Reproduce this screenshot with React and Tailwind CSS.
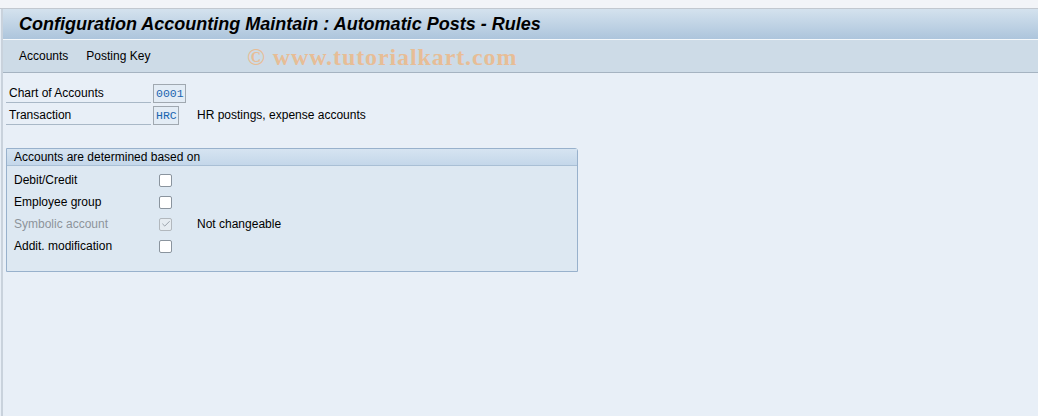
import { Check } from "lucide-react";

const ROWS = [
  { label: "Debit/Credit", checked: false },
  { label: "Employee group", checked: false },
  { label: "Symbolic account", checked: true, disabled: true, note: "Not changeable" },
  { label: "Addit. modification", checked: false },
];

function Field({ label, value, width, text }) {
  return (
    <div className="flex items-center h-[22px]">
      <div className="w-[145px] h-[19px] border-b border-[#a9b8c7] pl-[3px] text-[12px] leading-[19px] text-[#000]">
        {label}
      </div>
      <div
        className={`${width} ml-[2px] h-[19px] border border-[#a0a8b0] bg-[#e3ecf5] font-['Liberation_Mono'] text-[11.5px] leading-[17px] text-[#1b65b0] px-[2px]`}
      >
        {value}
      </div>
      {text && <span className="ml-[18px] text-[12px] text-[#000]">{text}</span>}
    </div>
  );
}

function Box({ checked, disabled }) {
  return (
    <div
      className={`w-[13px] h-[13px] rounded-[2px] border flex items-center justify-center ${
        disabled ? "border-[#b2b8be] bg-[#e6ecf1]" : "border-[#8a949e] bg-white"
      }`}
    >
      {checked && <Check size={10} strokeWidth={2} className="text-[#8a939c]" />}
    </div>
  );
}

export default function App() {
  return (
    <div className="w-[1038px] h-[416px] bg-[#e8eff7] font-['Liberation_Sans',Arial,sans-serif] overflow-hidden flex flex-col">
      <div className="h-[9px] bg-[#f2f4f8] border-b border-[#c2c8d0]" />
      <div className="flex-1 flex flex-col border-l-2 border-[#c9d2dc] ml-[1px]">
        <div className="h-[31px] bg-gradient-to-b from-[#d4e2ee] to-[#adc5dc] border-b border-[#f4f8fb] flex items-center pl-[16px]">
          <h1 className="text-[18px] font-bold italic text-black">
            Configuration Accounting Maintain : Automatic Posts - Rules
          </h1>
        </div>
        <div className="h-[33px] bg-[#cddbe7] border-b border-[#a5b3c1] flex items-center pl-[16px] text-[12px] text-black relative">
          <span>Accounts</span>
          <span className="ml-[18px]">Posting Key</span>
          <span className="absolute left-[244px] top-[-1px] font-['Liberation_Serif',serif] font-bold text-[24px] tracking-[0.9px] text-[#f0b47c] opacity-75">
            © www.tutorialkart.com
          </span>
        </div>
        <div className="pt-[9px] pl-[3px]">
          <Field label="Chart of Accounts" value="0001" width="w-[33px]" />
          <Field label="Transaction" value="HRC" width="w-[26px]" text="HR postings, expense accounts" />
        </div>
        <div className="mt-[22px] ml-[3px] w-[572px] h-[124px] border border-[#98b1cc] rounded-tr-[3px] bg-[#dde8f2] flex flex-col">
          <div className="h-[17px] bg-gradient-to-b from-[#d6e4f1] to-[#c4d7ea] border-b border-[#a9bfd5] pl-[7px] text-[12px] leading-[16px] text-black">
            Accounts are determined based on
          </div>
          <div className="pt-[3px] pl-[7px]">
            {ROWS.map((r) => (
              <div key={r.label} className="flex items-center h-[22px]">
                <span
                  className={`w-[145px] text-[12px] ${r.disabled ? "text-[#8d949b]" : "text-black"}`}
                >
                  {r.label}
                </span>
                <Box checked={r.checked} disabled={r.disabled} />
                {r.note && <span className="ml-[25px] text-[12px] text-black">{r.note}</span>}
              </div>
            ))}
          </div>
        </div>
      </div>
    </div>
  );
}
